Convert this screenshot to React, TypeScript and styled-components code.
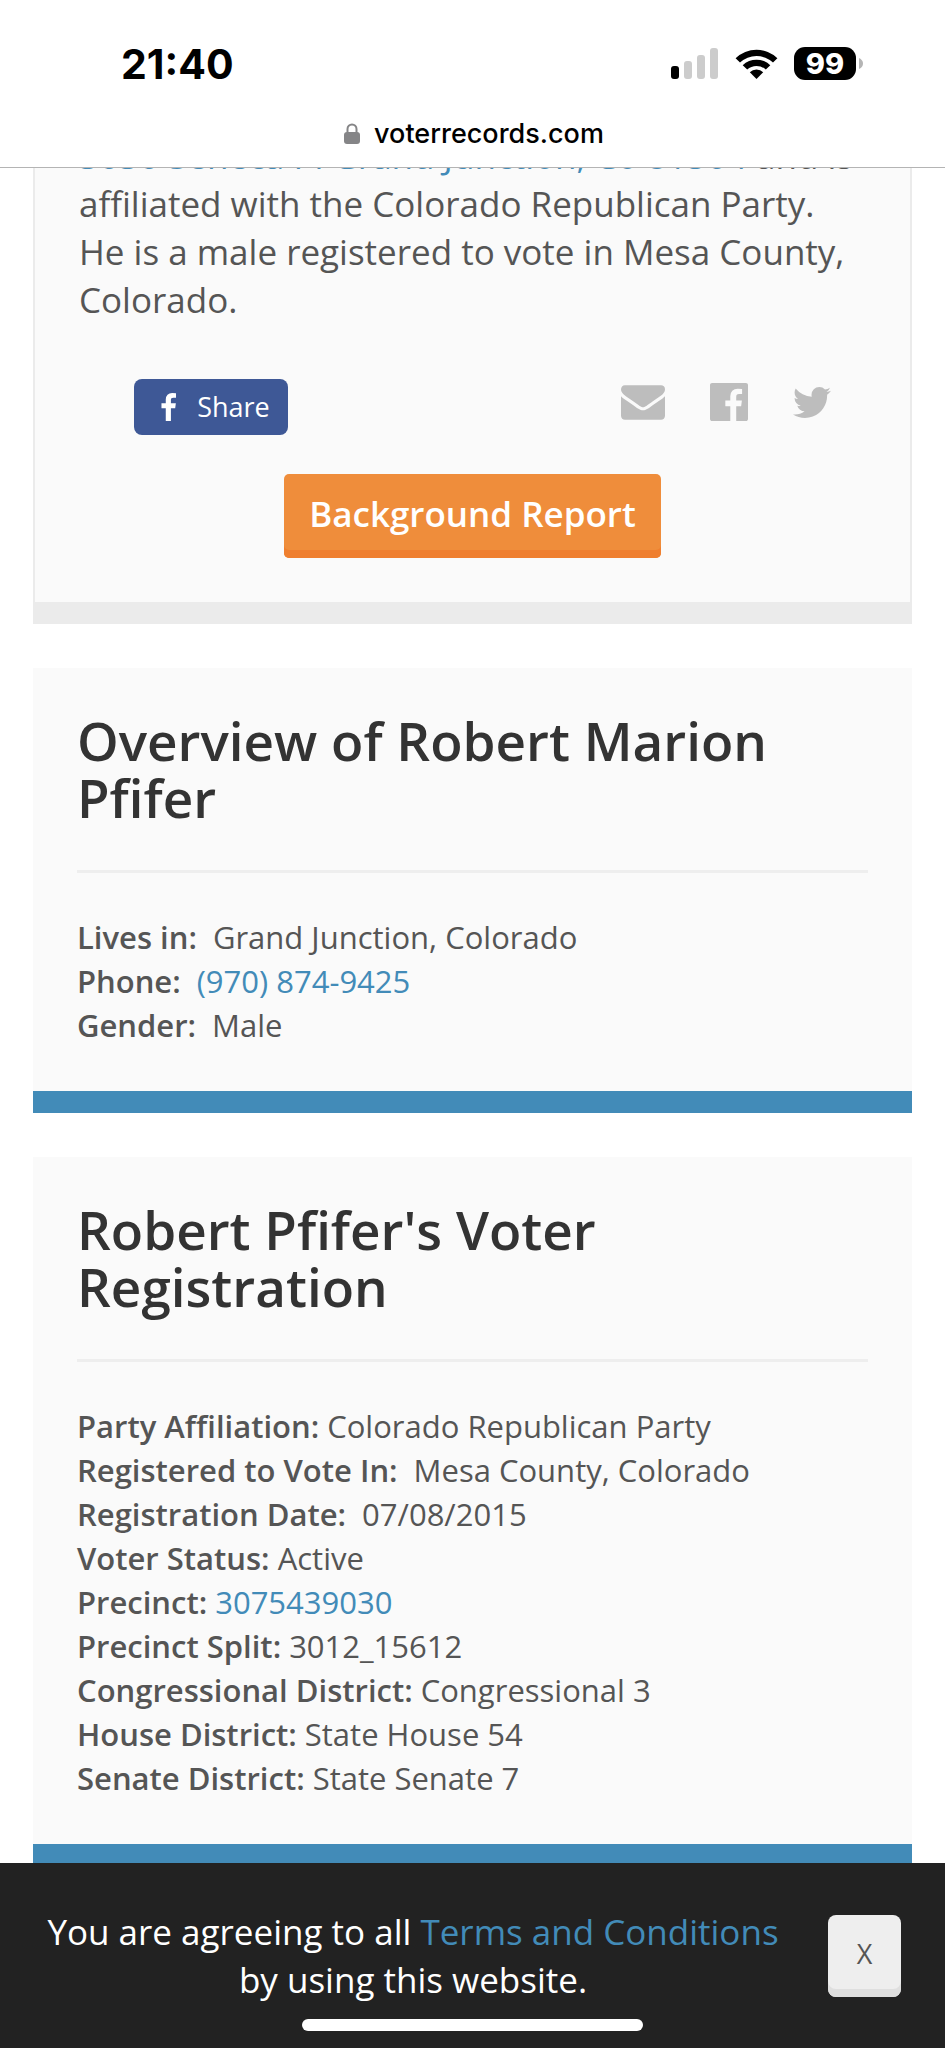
import React from "react";
import styled, { createGlobalStyle } from "styled-components";

const GlobalStyle = createGlobalStyle`
  * { box-sizing: border-box; }
  body {
    margin: 0;
    background: #fff;
    color: #555;
    font-family: "Open Sans", sans-serif;
    font-size: 31px;
    line-height: 44px;
  }
  h2, p, dl, dd { margin: 0; }
`;

const Screen = styled.div`
  display: flex;
  flex-direction: column;
  height: 100vh;
`;

const BrowserBar = styled.header`
  flex: none;
  padding-top: 36px;
  border-bottom: 1px solid #b4b4b4;
  color: #000;
  font-family: Inter, sans-serif;
`;

const StatusRow = styled.div`
  display: flex;
  align-items: center;
  justify-content: space-between;
  height: 56px;
  padding: 0 82px 0 121px;
`;

const Clock = styled.time`
  font-size: 41px;
  font-weight: 700;
`;

const StatusIcons = styled.div`
  display: flex;
  align-items: center;
  gap: 16px;
  height: 34px;
  margin-bottom: 2px;
`;

const Battery = styled.div`
  display: flex;
  align-items: center;
  gap: 2px;
`;

const BatteryLevel = styled.span`
  width: 62px;
  border-radius: 11px;
  background: #000;
  color: #fff;
  font-size: 29px;
  font-weight: 800;
  line-height: 33px;
  text-align: center;
`;

const AddressRow = styled.div`
  display: flex;
  align-items: center;
  justify-content: center;
  gap: 14px;
  height: 75px;
  padding: 8px 0 0 3px;
  font-size: 27px;
  font-weight: 500;
`;

const Main = styled.main`
  display: flex;
  flex: 1;
  flex-direction: column;
  gap: 44px;
  min-height: 0;
  padding: 0 33px;
  overflow: hidden;
`;

const Card = styled.section`
  flex: none;
  padding: 44px;
  background: #fafafa;
  border-bottom: 22px solid #428bb8;
`;

/* The profile card continues above the visible part of the page. */
const ProfileCard = styled(Card)`
  margin-top: -36px;
  padding-top: 0;
  border: 0 solid #ebebeb;
  border-width: 0 2px 22px;
`;

const TextLink = styled.a`
  color: #428bb8;
  text-decoration: none;
`;

const Summary = styled.p`
  font-size: 35px;
  line-height: 48px;
`;

const ShareRow = styled.div`
  display: flex;
  align-items: center;
  justify-content: space-between;
  margin-top: 55px;
  padding: 0 35px 0 55px;
`;

const ShareButton = styled.button`
  display: flex;
  align-items: center;
  justify-content: center;
  gap: 20px;
  width: 154px;
  height: 56px;
  padding: 0 0 0 8px;
  border: 0;
  border-radius: 8px;
  background: #3e5896;
  color: #fff;
  font: 27px/40px "Open Sans", sans-serif;
`;

const ShareIcons = styled.nav`
  display: flex;
  align-items: center;
  gap: 45px;
  padding-bottom: 10px;
`;

const IconLink = styled.a`
  display: flex;
  color: #bdbdbd;
`;

const ReportButton = styled.button`
  display: block;
  height: 84px;
  margin: 39px auto 0;
  padding: 0 25px 4px;
  border: 0;
  border-radius: 5px;
  background: #ef8d3b;
  box-shadow: inset 0 -8px 0 #ef7f2f;
  color: #fff;
  font: 600 35px/48px "Open Sans", sans-serif;
`;

const Title = styled.h2`
  padding-bottom: 44px;
  border-bottom: 3px solid #eee;
  color: #333;
  font-size: 53px;
  font-weight: 600;
  line-height: 57px;
`;

const Facts = styled.dl`
  margin-top: 42px;
`;

const Fact = styled.div<{ $wide?: boolean }>`
  display: flex;
  gap: ${(p) => (p.$wide ? "16px" : "8px")};
`;

const Term = styled.dt`
  font-weight: 600;
`;

const ConsentBar = styled.footer`
  flex: none;
  background: #222;
  color: #fff;
`;

const ConsentRow = styled.div`
  display: flex;
  align-items: center;
  padding: 45px 44px 15px 33px;
`;

const ConsentText = styled.p`
  flex: 1;
  padding: 0 10px;
  font-size: 35px;
  line-height: 48px;
  text-align: center;
`;

const CloseButton = styled.button`
  width: 73px;
  height: 82px;
  margin-left: 35px;
  padding: 0 0 4px;
  border: 0;
  border-radius: 8px;
  background: #eee;
  box-shadow: inset 0 -8px 0 #dfdfdf;
  color: #555;
  font: 27px/40px "Open Sans", sans-serif;
`;

const HomeIndicator = styled.div`
  width: 36%;
  height: 12px;
  margin: 0 auto 17px;
  border-radius: 6px;
  background: #fff;
`;

type FactItem = { label: string; value: string; href?: string; wide?: boolean };

const overview: FactItem[] = [
  { label: "Lives in:", value: "Grand Junction, Colorado", wide: true },
  { label: "Phone:", value: "(970) 874-9425", href: "tel:9708749425", wide: true },
  { label: "Gender:", value: "Male", wide: true },
];

const registration: FactItem[] = [
  { label: "Party Affiliation:", value: "Colorado Republican Party" },
  { label: "Registered to Vote In:", value: "Mesa County, Colorado", wide: true },
  { label: "Registration Date:", value: "07/08/2015", wide: true },
  { label: "Voter Status:", value: "Active" },
  { label: "Precinct:", value: "3075439030", href: "#precinct" },
  { label: "Precinct Split:", value: "3012_15612" },
  { label: "Congressional District:", value: "Congressional 3" },
  { label: "House District:", value: "State House 54" },
  { label: "Senate District:", value: "State Senate 7" },
];

function FactList({ items }: { items: FactItem[] }) {
  return (
    <Facts>
      {items.map((item) => (
        <Fact key={item.label} $wide={item.wide}>
          <Term>{item.label}</Term>
          <dd>{item.href ? <TextLink href={item.href}>{item.value}</TextLink> : item.value}</dd>
        </Fact>
      ))}
    </Facts>
  );
}

function SignalIcon() {
  return (
    <svg width="48" height="31" viewBox="0 0 48 31" aria-hidden="true">
      <rect x="0" y="18" width="8" height="13" rx="3" fill="#000" />
      <rect x="13" y="13" width="8" height="18" rx="3" fill="#ccc" />
      <rect x="26" y="7" width="8" height="24" rx="3" fill="#ccc" />
      <rect x="39" y="0" width="8" height="31" rx="3" fill="#ccc" />
    </svg>
  );
}

function WifiIcon() {
  return (
    <svg width="43" height="31" viewBox="0 0 43 31" aria-hidden="true">
      <path d="M0.600 10.200 A30 30 0 0 1 42.400 10.200 L38 14.600 A24 24 0 0 0 5 14.600 Z" />
      <path d="M7.700 17.200 A20 20 0 0 1 35.300 17.200 L30.800 21.600 A13.500 13.500 0 0 0 12.200 21.600 Z" />
      <path d="M14.800 24.300 A9.500 9.500 0 0 1 28.200 24.300 L21.500 31 Z" />
    </svg>
  );
}

function LockIcon() {
  return (
    <svg width="16" height="22" viewBox="0 0 16 22" aria-hidden="true">
      <rect x="0" y="9" width="16" height="12" rx="3" fill="#858587" />
      <path d="M3.500 10V6a4.500 4.500 0 0 1 9 0V10" fill="none" stroke="#858587" strokeWidth="2" />
    </svg>
  );
}

export default function App() {
  return (
    <Screen>
      <GlobalStyle />
      <BrowserBar>
        <StatusRow>
          <Clock>21:40</Clock>
          <StatusIcons>
            <SignalIcon />
            <WifiIcon />
            <Battery>
              <BatteryLevel>99</BatteryLevel>
              <svg width="5" height="11" viewBox="0 0 5 11" aria-hidden="true">
                <path d="M1 0Q5 2 5 5.500T1 11Z" fill="#b5b5b5" />
              </svg>
            </Battery>
          </StatusIcons>
        </StatusRow>
        <AddressRow>
          <LockIcon />
          <span>voterrecords.com</span>
        </AddressRow>
      </BrowserBar>

      <Main>
        <ProfileCard>
          <Summary>
            <TextLink href="#address">3030 Seneca Pl Grand Junction, Co 81504</TextLink> and is affiliated with the
            Colorado Republican Party. He is a male registered to vote in Mesa County, Colorado.
          </Summary>
          <ShareRow>
            <ShareButton type="button">
              <svg width="17" height="28" viewBox="450 0 893 1664" fill="currentColor" aria-hidden="true">
                <path d="M1343 12v264h-157q-86 0-116 36t-30 108v189h293l-39 296h-254v759h-306v-759h-255v-296h255v-218q0-186 104-288.500t277-102.500q147 0 228 12z" />
              </svg>
              Share
            </ShareButton>
            <ShareIcons aria-label="Share">
              <IconLink href="#email" aria-label="Email">
                <svg width="44" height="35" viewBox="0 256 1792 1408" fill="currentColor">
                  <path d="M1792 710v794q0 66-47 113t-113 47h-1472q-66 0-113-47t-47-113v-794q44 49 101 87 362 246 497 345 57 42 92.500 65.500t94.500 48 110 24.500h2q51 0 110-24.500t94.500-48 92.500-65.500q170-123 498-345 57-39 100-87zm0-294q0 79-49 151t-122 123q-376 261-468 325-10 7-42.500 31t-54 38.500-52 32.500-57.500 27-50 9h-2q-23 0-50-9t-57.500-27-52-32.500-54-38.500-42.500-31q-91-64-262-182.500t-205-142.500q-62-42-117-115.500t-55-136.500q0-78 41.500-130t118.500-52h1472q65 0 112.500 47t47.500 113z" />
                </svg>
              </IconLink>
              <IconLink href="#facebook" aria-label="Facebook">
                <svg width="38" height="38" viewBox="128 128 1536 1536" fill="currentColor">
                  <path d="M1579 128q35 0 60 25t25 60v1366q0 35-25 60t-60 25h-391v-595h199l30-232h-229v-148q0-56 23.500-84t91.500-28l122-1v-207q-63-9-178-9-136 0-217.500 80t-81.500 226v171h-200v232h200v595h-735q-35 0-60-25t-25-60v-1366q0-35 25-60t60-25h1366z" />
                </svg>
              </IconLink>
              <IconLink href="#twitter" aria-label="Twitter">
                <svg width="38" height="31" viewBox="108 256 1576 1280" fill="currentColor">
                  <path d="M1684 408q-67 98-162 167 1 14 1 42 0 130-38 259.500t-115.500 248.500-184.500 210.500-258 146-323 54.500q-271 0-496-145 35 4 78 4 225 0 401-138-105-2-188-64.500t-114-159.500q33 5 61 5 43 0 85-11-112-23-185.500-111.500t-73.500-205.500v-4q68 38 146 41-66-44-105-115t-39-154q0-88 44-163 121 149 294.500 238.500t371.500 99.500q-8-38-8-74 0-134 94.500-228.500t228.500-94.500q140 0 236 102 109-21 205-78-37 115-142 178 93-10 186-50z" />
                </svg>
              </IconLink>
            </ShareIcons>
          </ShareRow>
          <ReportButton type="button">Background Report</ReportButton>
        </ProfileCard>

        <Card>
          <Title>Overview of Robert Marion Pfifer</Title>
          <FactList items={overview} />
        </Card>

        <Card>
          <Title>Robert Pfifer's Voter Registration</Title>
          <FactList items={registration} />
        </Card>
      </Main>

      <ConsentBar>
        <ConsentRow>
          <ConsentText>
            You are agreeing to all <TextLink href="#terms">Terms and Conditions</TextLink> by using this website.
          </ConsentText>
          <CloseButton type="button" aria-label="Close">
            X
          </CloseButton>
        </ConsentRow>
        <HomeIndicator />
      </ConsentBar>
    </Screen>
  );
}
